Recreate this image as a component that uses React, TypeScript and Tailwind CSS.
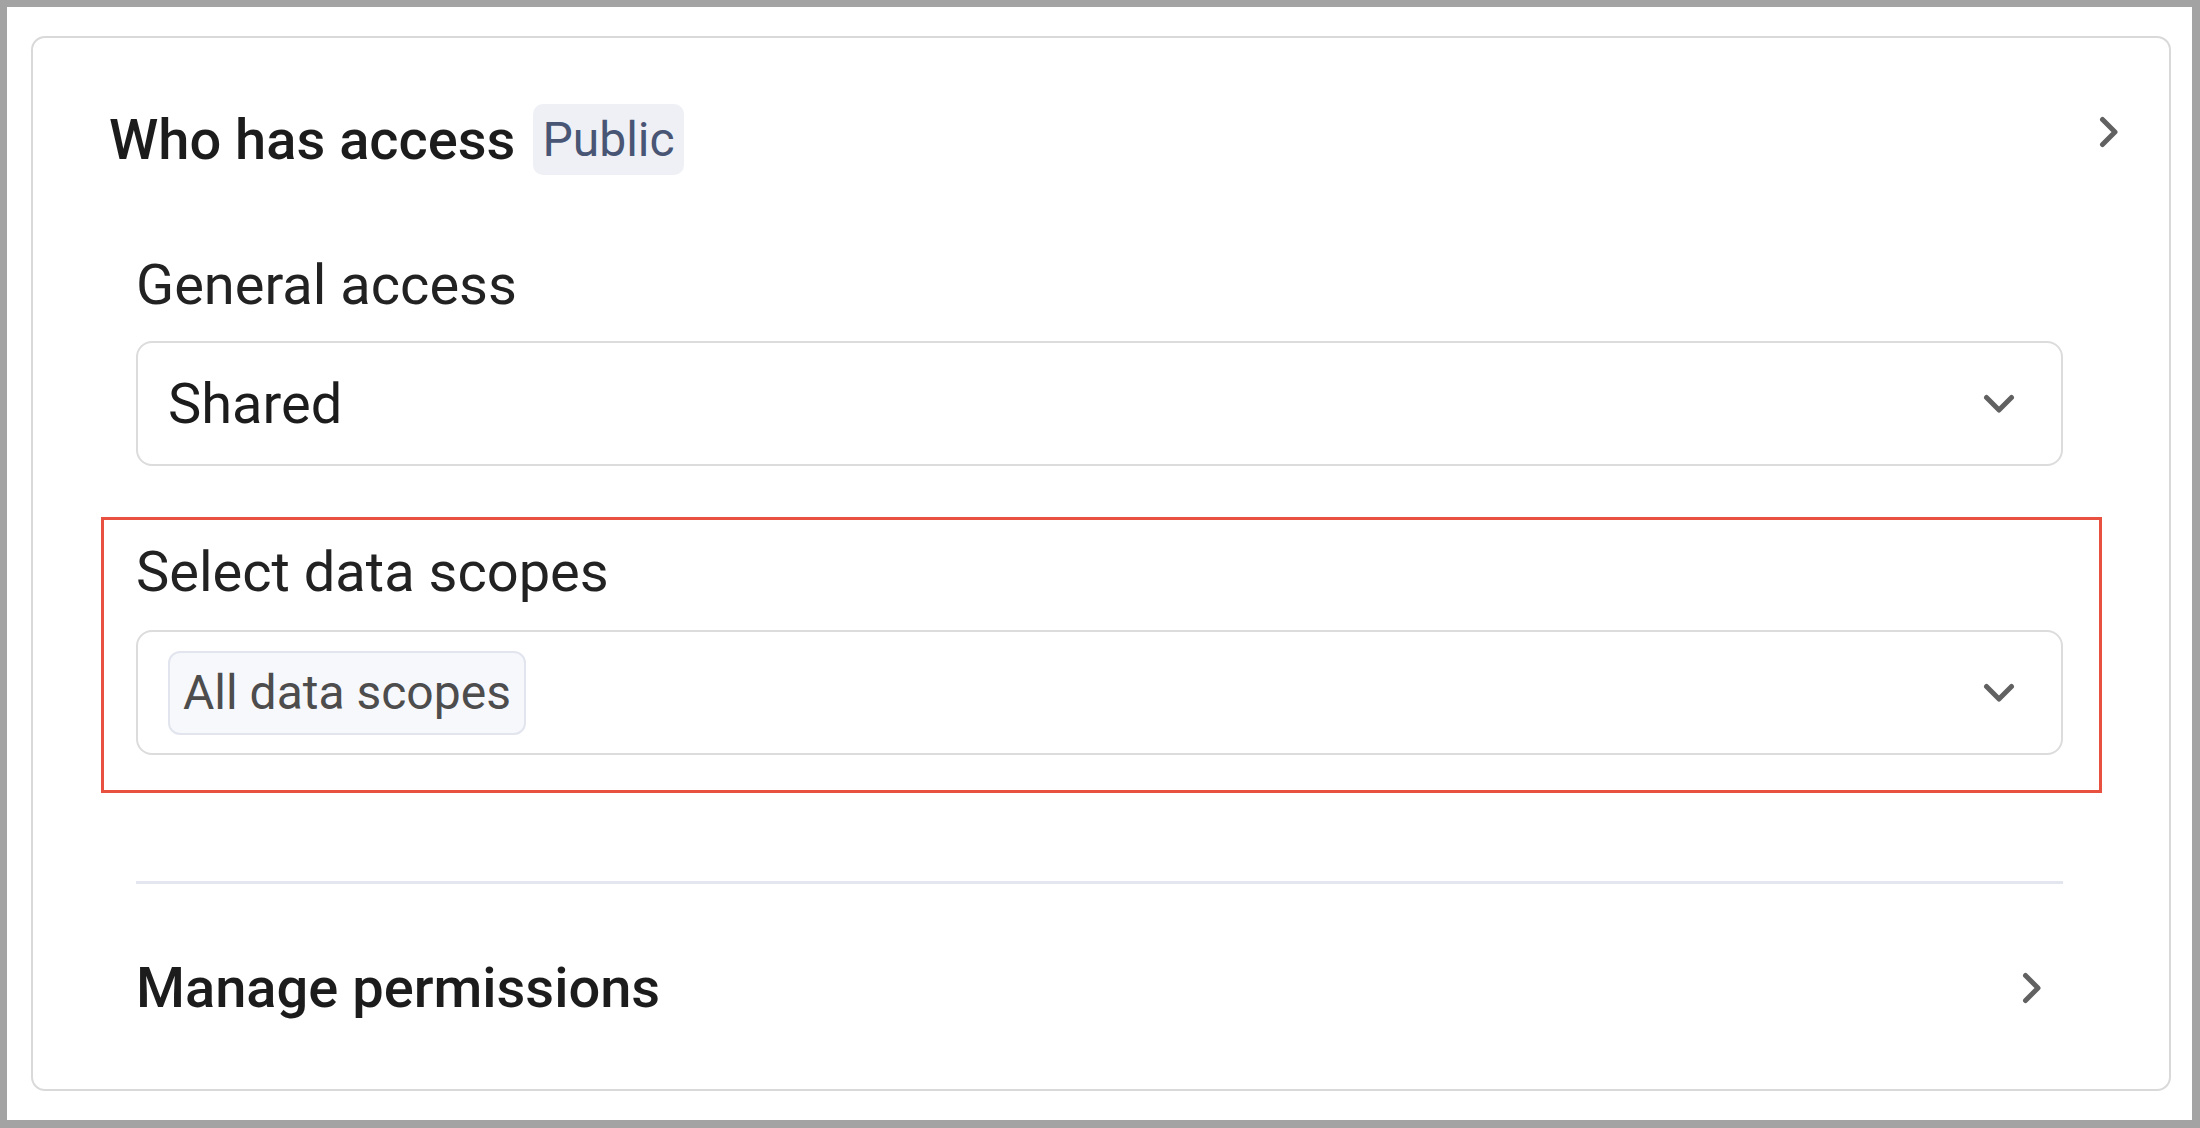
import React from "react";

const ChevronDown = () => (
  <svg width="32" height="20" viewBox="0 0 32 20" fill="none">
    <polyline
      points="3.5,3.5 16,16 28.5,3.5"
      stroke="#616161"
      strokeWidth="5"
      strokeLinecap="round"
      strokeLinejoin="round"
    />
  </svg>
);

const ChevronRight = () => (
  <svg width="20" height="32" viewBox="0 0 20 32" fill="none">
    <polyline
      points="3.5,3.5 16,16 3.5,28.5"
      stroke="#616161"
      strokeWidth="5"
      strokeLinecap="round"
      strokeLinejoin="round"
    />
  </svg>
);

const SelectBox = ({ children }: { children: React.ReactNode }) => (
  <div className="h-[125px] flex items-center justify-between border-2 border-[#dcdcdc] rounded-[16px] pl-[30px] pr-[46px] bg-white">
    <div className="flex items-center">{children}</div>
    <ChevronDown />
  </div>
);

const App = () => {
  return (
    <div className="w-full h-[1128px] bg-white border-[#a3a3a3] border-t-[7px] border-l-[7px] border-r-[8px] border-b-[8px] pt-[29px] pl-[24px] pr-[21px] pb-[29px] font-['Roboto',sans-serif]">
      <div className="h-full border-2 border-[#d9d9d9] rounded-[14px] flex flex-col">
        <div className="mt-[66px] h-[71px] flex items-center justify-between pl-[76px] pr-[50px]">
          <div className="flex items-center gap-[18px]">
            <span className="text-[56px] font-medium text-[#1c1c1c] leading-none">
              Who has access
            </span>
            <span className="h-[71px] px-[9px] flex items-center rounded-[10px] bg-[#eef0f5] text-[48px] text-[#485574] leading-none">
              Public
            </span>
          </div>
          <div className="mb-[16px]">
            <ChevronRight />
          </div>
        </div>

        <div className="pl-[103px] pr-[106px] flex flex-col flex-1">
          <div className="mt-[76px] h-[67px] flex items-center text-[56px] text-[#222222] leading-none">
            General access
          </div>
          <div className="mt-[23px]">
            <SelectBox>
              <span className="text-[56px] text-[#1c1c1c] leading-none">Shared</span>
            </SelectBox>
          </div>

          <div className="mt-[51px] -ml-[35px] -mr-[39px] border-[3px] border-[#e8503f] pl-[32px] pr-[36px] pt-[18px] pb-[35px]">
            <div className="h-[67px] flex items-center text-[56px] text-[#222222] leading-none">
              Select data scopes
            </div>
            <div className="mt-[25px]">
              <SelectBox>
                <span className="h-[84px] px-[13px] flex items-center rounded-[12px] border-2 border-[#e2e5ee] bg-[#f7f8fc] text-[48px] text-[#4d4d4d] leading-none">
                  All data scopes
                </span>
              </SelectBox>
            </div>
          </div>

          <div className="mt-[88px] h-[3px] bg-[#e3e6ee]" />

          <div className="flex-1 flex items-center justify-between pr-[21px] pt-[2px]">
            <span className="text-[56px] font-medium text-[#1c1c1c] leading-none">
              Manage permissions
            </span>
            <ChevronRight />
          </div>
        </div>
      </div>
    </div>
  );
};

export default App;
